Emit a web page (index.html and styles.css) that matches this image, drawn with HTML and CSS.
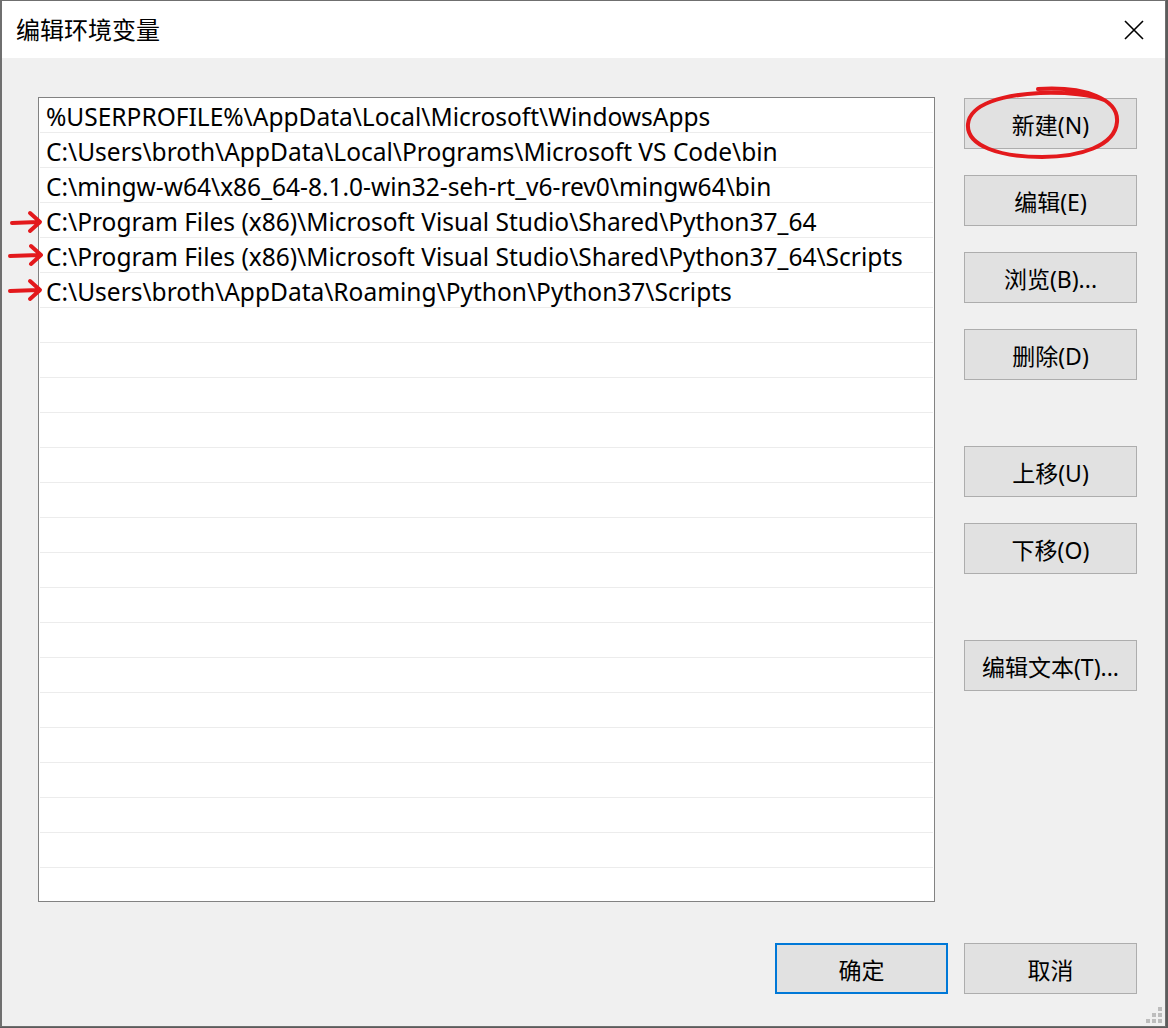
FILE: index.html
```html
<!DOCTYPE html>
<html>
<head>
    <title>编辑环境变量</title>
    <link rel="stylesheet" href="styles.css">
</head>
<body>
    <div class="window">
        <div class="titlebar">
            <span class="title">编辑环境变量</span>
            <svg class="close" width="20" height="20" viewBox="0 0 20 20">
                <path d="M1 1 L19 19 M19 1 L1 19" stroke="#000" stroke-width="1.6" fill="none"/>
            </svg>
        </div>

        <div class="main">
            <div class="list">
                <div class="row">%USERPROFILE%\AppData\Local\Microsoft\WindowsApps</div>
                <div class="row">C:\Users\broth\AppData\Local\Programs\Microsoft VS Code\bin</div>
                <div class="row">C:\mingw-w64\x86_64-8.1.0-win32-seh-rt_v6-rev0\mingw64\bin</div>
                <div class="row">C:\Program Files (x86)\Microsoft Visual Studio\Shared\Python37_64</div>
                <div class="row">C:\Program Files (x86)\Microsoft Visual Studio\Shared\Python37_64\Scripts</div>
                <div class="row">C:\Users\broth\AppData\Roaming\Python\Python37\Scripts</div>
                <div class="row"></div>
                <div class="row"></div>
                <div class="row"></div>
                <div class="row"></div>
                <div class="row"></div>
                <div class="row"></div>
                <div class="row"></div>
                <div class="row"></div>
                <div class="row"></div>
                <div class="row"></div>
                <div class="row"></div>
                <div class="row"></div>
                <div class="row"></div>
                <div class="row"></div>
                <div class="row"></div>
                <div class="row"></div>
                <div class="row last"></div>
            </div>

            <div class="side">
                <button class="btn">新建(N)</button>
                <button class="btn">编辑(E)</button>
                <button class="btn">浏览(B)...</button>
                <button class="btn">删除(D)</button>
                <button class="btn group">上移(U)</button>
                <button class="btn">下移(O)</button>
                <button class="btn group">编辑文本(T)...</button>
            </div>
        </div>

        <div class="footer">
            <button class="btn ok">确定</button>
            <button class="btn">取消</button>
        </div>
    </div>

    <!-- red marks drawn over the screenshot -->
    <svg class="marks" width="1168" height="1028" viewBox="0 0 1168 1028">
        <g stroke="#e3191c" stroke-width="4" fill="none" stroke-linecap="round" stroke-linejoin="round">
            <path d="M1038 89 C1085 86 1119 99 1117 122 C1115 146 1080 157 1042 157 C1000 157 966 146 968 124 C970 104 1002 95 1040 93 C1068 92 1092 95 1104 100"/>
            <path d="M12 223 L38 222 M30 213 L40 222 L30 231"/>
            <path d="M10 256 L39 255 M31 246 L41 255 L31 264"/>
            <path d="M10 291 L38 290 M30 281 L40 290 L30 299"/>
        </g>
        <g fill="#bdbdbd">
            <rect x="1158" y="1007" width="4" height="4"/>
            <rect x="1152" y="1013" width="4" height="4"/>
            <rect x="1158" y="1013" width="4" height="4"/>
            <rect x="1146" y="1019" width="4" height="4"/>
            <rect x="1152" y="1019" width="4" height="4"/>
            <rect x="1158" y="1019" width="4" height="4"/>
        </g>
    </svg>
</body>
</html>
```

FILE: styles.css
```css
body{
    margin: 0;
    background-color: #5c5c5c;
    font-family: "Noto Sans", "Noto Sans CJK SC", sans-serif;
    color: #000;
}

.window{
    width: 1163px;
    height: 1025px;
    border: 1px solid #6f6f6f;
    border-left: 2px solid #6f6f6f;
    background-color: #f0f0f0;
    display: flex;
    flex-direction: column;
}

.titlebar{
    height: 57px;
    background-color: #fff;
    display: flex;
    align-items: center;
    justify-content: space-between;
    padding-left: 14px;
    padding-right: 21px;
}

.title{
    font-family: "Noto Sans CJK SC", sans-serif;
    font-size: 24px;
    padding-bottom: 3px;
}

.main{
    display: flex;
    padding-top: 39px;
    padding-left: 36px;
}

.list{
    width: 893px;
    height: 803px;
    border: 1px solid #828282;
    background-color: #fff;
    padding: 0 1px;
    overflow: hidden;
}

.row{
    height: 35px;
    box-sizing: border-box;
    border-bottom: 1px solid #ececec;
    padding-left: 6px;
    padding-top: 2px;
    font-size: 24.5px;
    line-height: 33px;
    white-space: nowrap;
}

.row.last{
    border-bottom: none;
}

.side{
    display: flex;
    flex-direction: column;
    gap: 26px;
    margin-left: 29px;
    padding-top: 1px;
}

.btn{
    width: 173px;
    height: 51px;
    border: 1px solid #adadad;
    background-color: #e1e1e1;
    font-family: "Noto Sans", "Noto Sans CJK SC", sans-serif;
    font-size: 23px;
    color: #000;
    padding: 0;
}

.btn.group{
    margin-top: 40px;
}

.footer{
    display: flex;
    justify-content: flex-end;
    gap: 16px;
    padding-top: 41px;
    padding-right: 28px;
}

.btn.ok{
    border: 2px solid #0078d7;
}

.marks{
    position: absolute;
    left: 0;
    top: 0;
}
```
